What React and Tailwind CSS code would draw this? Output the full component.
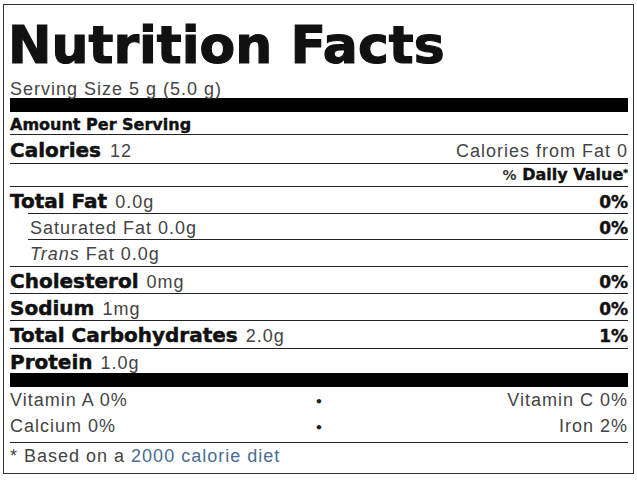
const bold = "font-['DejaVu_Sans',sans-serif] font-bold text-[20px] leading-none text-[#111] [-webkit-text-stroke:0.5px_#111]"
const reg = "font-['Liberation_Sans',Arial,sans-serif] text-[18px] leading-none tracking-[1px] text-[#444]"
const pct = "font-['DejaVu_Sans',sans-serif] font-bold text-[17px] leading-none text-[#111] [-webkit-text-stroke:0.4px_#111]"

function Rule({ indent }) {
  return <div className={indent ? 'h-px bg-[#222] ml-[18px]' : 'h-px bg-[#222]'} />
}

function Bar() {
  return <div className="h-[14px] bg-black" />
}

function Nutrient({ label, amount, value, cls }) {
  return (
    <div className={`flex items-baseline justify-between ${cls}`}>
      <div className="flex items-baseline gap-[8px]">
        <span className={bold}>{label}</span>
        <span className={reg}>{amount}</span>
      </div>
      {value && <span className={pct}>{value}</span>}
    </div>
  )
}

function Dot() {
  return (
    <span className="text-center font-['DejaVu_Sans',sans-serif] font-bold text-[13px] leading-none text-[#222]">•</span>
  )
}

export default function App() {
  return (
    <div className="pt-[4px] pl-[3px] bg-white min-h-[480px]">
      <div className="w-[631px] border border-[#333] bg-white pl-[6px] pr-[5px]">
        <div className="h-[74px] pt-[10px]">
          <h1 className="-ml-[2px] font-['DejaVu_Sans',sans-serif] font-bold text-[52px] leading-[60px] text-[#111] whitespace-nowrap [-webkit-text-stroke:1.2px_#111]">
            Nutrition Facts
          </h1>
        </div>
        <div className="flex items-baseline h-[19px] pt-px">
          <span className={reg}>Serving Size 5 g (5.0 g)</span>
        </div>
        <Bar />

        <div className="flex items-baseline h-[22px] pt-[5px]">
          <span className="font-['DejaVu_Sans',sans-serif] font-bold text-[16px] leading-none text-[#111] [-webkit-text-stroke:0.4px_#111]">
            Amount Per Serving
          </span>
        </div>
        <Rule />

        <div className="flex items-baseline justify-between h-[28px] pt-[5px]">
          <div className="flex items-baseline gap-[9px]">
            <span className={bold}>Calories</span>
            <span className={reg}>12</span>
          </div>
          <span className={reg}>Calories from Fat 0</span>
        </div>
        <Rule />

        <div className="flex items-baseline justify-end h-[22px] pt-[3px]">
          <span className="font-['DejaVu_Sans',sans-serif] font-bold text-[16px] leading-none text-[#111] [-webkit-text-stroke:0.4px_#111]">
            <span className="text-[14px] text-[#333] [-webkit-text-stroke:0px]">%</span> Daily Value
            <span className="relative -top-[4px] text-[9px]">*</span>
          </span>
        </div>
        <Rule />

        <Nutrient label="Total Fat" amount="0.0g" value="0%" cls="h-[26px] pt-[4px]" />
        <Rule indent />

        <div className="flex items-baseline justify-between h-[25px] pt-[5px] pl-[20px]">
          <span className={reg}>Saturated Fat 0.0g</span>
          <span className={pct}>0%</span>
        </div>
        <Rule indent />

        <div className="flex items-baseline h-[26px] pt-[5px] pl-[20px]">
          <span className={reg}>
            <i>Trans</i> Fat 0.0g
          </span>
        </div>
        <Rule />

        <Nutrient label="Cholesterol" amount="0mg" value="0%" cls="h-[26px] pt-[4px]" />
        <Rule />
        <Nutrient label="Sodium" amount="1mg" value="0%" cls="h-[26px] pt-[4px]" />
        <Rule />
        <Nutrient label="Total Carbohydrates" amount="2.0g" value="1%" cls="h-[27px] pt-[4px]" />
        <Rule />
        <Nutrient label="Protein" amount="1.0g" cls="h-[24px] pt-[3px]" />
        <Bar />

        <div className="grid grid-cols-3 items-baseline h-[26px] pt-[4px]">
          <span className={reg}>Vitamin A 0%</span>
          <Dot />
          <span className={`${reg} text-right`}>Vitamin C 0%</span>
        </div>
        <div className="grid grid-cols-3 items-baseline h-[29px] pt-[4px]">
          <span className={reg}>Calcium 0%</span>
          <Dot />
          <span className={`${reg} text-right`}>Iron 2%</span>
        </div>
        <Rule />

        <div className="flex items-baseline h-[30px] pt-[4px]">
          <span className={reg}>
            * Based on a <span className="text-[#4a6c96]">2000 calorie diet</span>
          </span>
        </div>
      </div>
    </div>
  )
}
